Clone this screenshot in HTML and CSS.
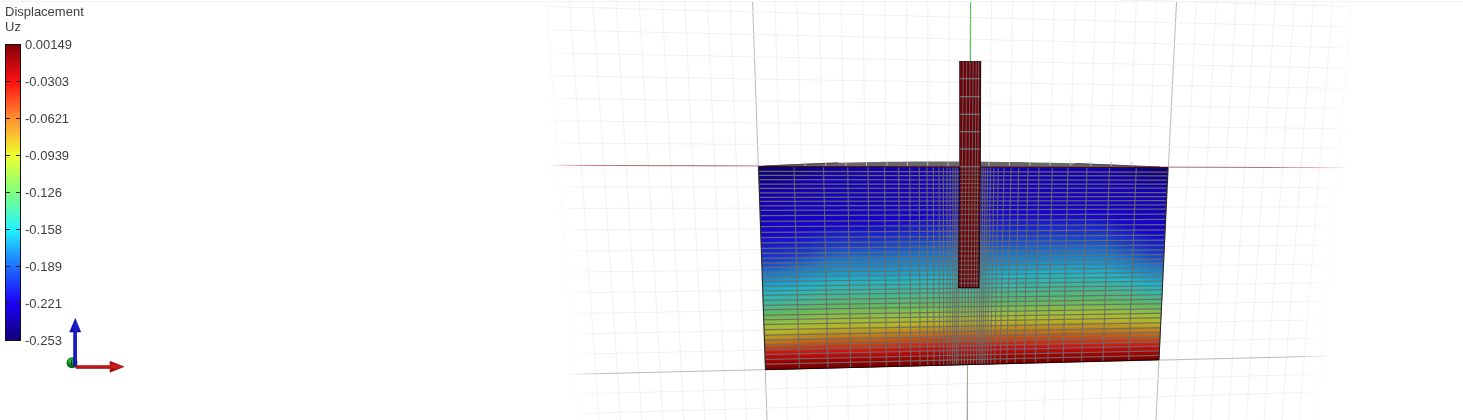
FILE: index.html
```
<!DOCTYPE html>
<html lang="en">
<head>
<meta charset="utf-8">
<title>Displacement Uz</title>
<link rel="stylesheet" href="styles.css">
</head>
<body>
<main class="viewer">
  <canvas class="scene" role="img" aria-label="Deformed mesh coloured by vertical displacement"></canvas>
  <section class="legend">
    <h1 class="legend-title">Displacement<br>Uz</h1>
    <div class="legend-scale">
      <div class="legend-bar"></div>
      <ul class="legend-labels">
        <li>0.00149</li>
        <li>-0.0303</li>
        <li>-0.0621</li>
        <li>-0.0939</li>
        <li>-0.126</li>
        <li>-0.158</li>
        <li>-0.189</li>
        <li>-0.221</li>
        <li>-0.253</li>
      </ul>
    </div>
  </section>
  <svg class="triad" viewBox="60 315 70 60" aria-hidden="true">
    <defs>
      <linearGradient id="blue"><stop offset="0" stop-color="#0000a0"/><stop offset=".6" stop-color="#2020d4"/><stop offset="1" stop-color="#000090"/></linearGradient>
      <linearGradient id="red" x2="0" y2="1"><stop offset="0" stop-color="#a00000"/><stop offset=".45" stop-color="#d42020"/><stop offset="1" stop-color="#800000"/></linearGradient>
      <radialGradient id="green" cx=".4" cy=".35"><stop offset="0" stop-color="#60c070"/><stop offset=".5" stop-color="#0a9424"/><stop offset="1" stop-color="#046014"/></radialGradient>
    </defs>
    <circle cx="72" cy="362.7" r="5.5" fill="url(#green)"/>
    <path d="M71.500 360v5" stroke="#063c10" fill="none"/>
    <path d="M74 365.3H111V368.7H76z" fill="url(#red)"/>
    <path d="M110 361.3L124 366.7L110 372.3z" fill="url(#red)" stroke="#900000" stroke-width=".5"/>
    <path d="M73.3 331h3.6v34.5l-2 1.5l-1.600-1.500z" fill="url(#blue)"/>
    <path d="M75.300 318.500L80.700 332H69.700z" fill="url(#blue)" stroke="#000080" stroke-width=".5"/>
  </svg>
</main>
<script src="scene.js"></script>
</body>
</html>
```
FILE: styles.css
```
body {
  margin: 0;
  background: #fff;
  color: #404040;
  font: 13px/15px "Liberation Sans", Arial, sans-serif;
}

.viewer {
  position: relative;
  min-height: 100vh;
  overflow: hidden;
}

.scene {
  position: absolute;
  inset: 0;
  width: 100%;
  height: 100%;
}

.legend {
  position: relative;
  display: flex;
  flex-direction: column;
  gap: 3px;
  padding: 4px 5px;
}

.legend-title {
  margin: 0;
  font: inherit;
}

.legend-scale {
  display: flex;
  gap: 4px;
}

.legend-bar {
  box-sizing: border-box;
  width: 16px;
  margin: 7px 0;
  border: 1px solid #111;
  background:
    linear-gradient(#222 1px, transparent 1px) left 0 top -1px / 4px 37px repeat-y,
    linear-gradient(#222 1px, transparent 1px) right 0 top -1px / 4px 37px repeat-y,
    linear-gradient(#84000a, #ff1010 12.5%, #ff9030 25%, #f0ff30 37.5%, #80ff80 50%, #20f4ff 62.5%, #2070ff 75%, #1a00f8 87.5%, #100078);
}

.legend-labels {
  display: flex;
  flex-direction: column;
  gap: 22px;
  margin: 0;
  padding: 0;
  list-style: none;
}

.triad {
  position: absolute;
  left: 60px;
  bottom: 45px;
  width: 70px;
  height: 60px;
}
```
FILE: scene.js
```
const canvas = document.querySelector('.scene');
const ctx = canvas.getContext('2d');

// Outline of the soil block: top left, top right, bottom right, bottom left
const soil = [[758.5, 166.5], [1168, 167.5], [1159, 360], [765.5, 370]];

const palette = ['#0c006c', '#1400b4', '#1604d0', '#1a40cc', '#1a78cc', '#1a92cc', '#18b8cc', '#3cb89c',
  '#60bb60', '#a0c034', '#b8b420', '#c07018', '#cc1010', '#a00000', '#700000'];

// Height of each palette colour at a few sections through the block
const sections = [
  [762, [168, 195, 235, 262, 274, 281, 291, 303, 314, 326, 333, 343, 353, 362, 370]],
  [850, [150, 172, 225, 246, 260, 270, 281, 293, 306, 320, 327, 338, 352, 360, 368]],
  [960, [150, 168, 214, 238, 255, 266, 277, 289, 304, 316, 322, 333, 347, 357, 366]],
  [1090, [150, 170, 214, 237, 253, 262, 273, 286, 301, 313, 320, 332, 347, 355, 362]],
  [1168, [168, 190, 235, 256, 268, 276, 286, 296, 306, 316, 323, 334, 346, 354, 360]]
];

// Mesh columns: x at the top edge, x at the bottom edge
const columns = [[794, 799.3], [823.5, 828], [847.7, 850.7], [868, 870.3], [884.5, 886.3], [898.7, 899.7],
  [909.7, 910.7], [919.3, 920], [927, 927.7], [933.3, 934], [939, 939.7], [943.3, 943.7], [947, 947.3],
  [950, 950], [953, 952.5], [955.3, 954.5], [957.3, 956.5], [960, 958], [963.3, 961.5], [966.7, 964.5],
  [970, 967.5], [973, 970.5], [976, 973.5], [978.5, 976.5], [981, 979], [983, 981], [985.3, 982.7],
  [987.7, 984.7], [990.5, 987.3], [994, 990.7], [998.3, 994.7], [1004, 1000], [1011, 1006.7],
  [1018.7, 1015], [1028, 1024], [1039, 1035.3], [1052.3, 1047.7], [1068, 1063], [1087, 1081.3],
  [1109.5, 1102.7], [1136.3, 1128.3]];

const rows = [171.3, 175.3, 179.7, 184, 188.3, 193, 197.3, 201.3, 206, 210.3, 215.7, 221.3, 226.7, 232.3,
  237.7, 243, 248.3, 253.3, 258.3, 263.2, 267.7, 272.3, 277, 281.7, 286.3, 291, 295.3, 300.5, 305.3, 310,
  315.3, 320, 324.7, 330, 335.3, 340.3, 345.3, 350, 354.7, 359.7, 364.3];

function line(x1, y1, x2, y2, stroke, width = 1) {
  ctx.strokeStyle = stroke;
  ctx.lineWidth = width;
  ctx.beginPath();
  ctx.moveTo(x1, y1);
  ctx.lineTo(x2, y2);
  ctx.stroke();
}

function shape(points) {
  ctx.beginPath();
  points.forEach(([x, y]) => ctx.lineTo(x, y));
  ctx.closePath();
}

function drawGrid() {
  for (let t = -19; t <= 19; t++) {
    const major = t % 10 === 0;
    line(970.5 + 21.2 * t - 0.0595 * t * t, 1, 967 + 19.45 * t - 0.055 * t * t, 420,
      major ? '#b8b8b8' : '#f0f0f0');
  }
  for (let n = -8; n <= 12; n++) {
    if (n === 0) continue;
    line(545, 165 + 21.96 * n - 0.0965 * n * n, 1350, 168 + 19.55 * n - 0.08 * n * n,
      n === 10 ? '#b8b8b8' : '#f0f0f0');
  }
  const axis = ctx.createLinearGradient(545, 0, 1350, 0);
  [[0, '#e09090'], [0.1, '#b87070'], [0.2, '#8c6464'], [0.27, '#b09090'],
    [0.78, '#a07070'], [0.9, '#a87070'], [0.93, '#e8a0a0'], [1, '#e8a0a0']]
    .forEach(([at, colour]) => axis.addColorStop(at, colour));
  line(545, 165.3, 1350, 167.7, axis);
  line(970.5, 1, 970.5, 61, '#50d050');
  line(967.5, 362, 967.5, 420, '#98b098');

  const fade = (x1, y1, x2, y2, left, width) => {
    const g = ctx.createLinearGradient(x1, y1, x2, y2);
    g.addColorStop(0, '#fff');
    g.addColorStop(1, 'rgba(255,255,255,0)');
    ctx.fillStyle = g;
    ctx.fillRect(left, 0, width, 420);
  };
  fade(549, 210, 588, 206, 530, 120);
  fade(1346, 210, 1306, 206, 1260, 100);
}

function drawSoil() {
  // Far rim of the block seen over its top edge
  ctx.fillStyle = '#686868';
  ctx.beginPath();
  ctx.moveTo(758, 166.5);
  ctx.bezierCurveTo(850, 159.5, 1060, 160, 1168, 168);
  ctx.fill();
  line(764, 166, 838, 162.8, '#444');
  line(1075, 163.5, 1160, 167, '#444');
  for (let t = -8; t < 9; t++) {
    const x = 968.5 + 20.4 * t;
    line(x, 162, x, 166, '#b8b8b8');
  }

  ctx.save();
  shape(soil);
  ctx.clip();
  for (let x = 758; x < 1169; x++) {
    let s = 0;
    while (s < sections.length - 2 && x > sections[s + 1][0]) s++;
    const [xa, a] = sections[s];
    const [xb, b] = sections[s + 1];
    const f = (1 - Math.cos(Math.PI * Math.max(0, (x - xa) / (xb - xa)))) / 2;
    const g = ctx.createLinearGradient(0, 140, 0, 380);
    palette.forEach((colour, i) => g.addColorStop((a[i] + (b[i] - a[i]) * f - 140) / 240, colour));
    ctx.fillStyle = g;
    ctx.fillRect(x, 160, 1, 215);
  }
  rows.forEach(y => {
    const f = (y - 166.5) / 203;
    line(757, y, 1169, 167.5 + f * 192.5, 'rgba(108,108,108,.95)', 1.25);
  });
  columns.forEach(([top, bottom]) => line(top, 167, bottom, 370, 'rgba(108,108,108,.9)', 1.1));
  ctx.restore();

  line(758.5, 166.5, 1168, 167.5, '#480010');
  line(758.5, 167, 765.5, 370, '#222');
  line(1168, 168, 1159, 360, '#222');
  line(765.5, 369.7, 1159, 359.8, '#200000');
}

function drawPileBody() {
  shape([[959.5, 61], [981, 61], [980.3, 167], [979, 288], [958.3, 288], [959.5, 167]]);
  ctx.fillStyle = '#6c0008';
  ctx.fill();
}

function drawPile() {
  drawPileBody();
  [963.3, 966.7, 970, 973.2, 976.2, 978.7].forEach(x => line(x, 61, x - 2, 288, '#6c6060'));
  [78.7, 96.7, 114.3, 131.7, 149, 166.7].forEach(y => line(959.5, y, 980.5, y, '#747474', 1.3));
  rows.filter(y => y < 290).forEach(y => {
    const drawn = y - (y - 166.5) * 0.025;
    line(958.5, drawn, 980, drawn, '#6c6060');
  });
  line(959.7, 61, 959.7, 167, '#503838');
  line(959.7, 167, 958.5, 288, '#201010');
  line(980.7, 61, 980.3, 167, '#201010');
  line(980.3, 167, 979, 288, '#201010');
  line(959.5, 61.5, 981, 61.5, '#402020');
  line(958.3, 287.7, 979, 287.7, '#100000');
}

function draw() {
  canvas.width = canvas.clientWidth;
  canvas.height = canvas.clientHeight;
  ctx.save();
  ctx.translate(Math.round((canvas.width - 1463) / 2), 0);
  drawGrid();
  drawSoil();
  drawPile();
  ctx.restore();
  line(0, 1.5, canvas.width, 1.5, '#f2f2f2');
}

window.addEventListener('resize', draw);
draw();
```
